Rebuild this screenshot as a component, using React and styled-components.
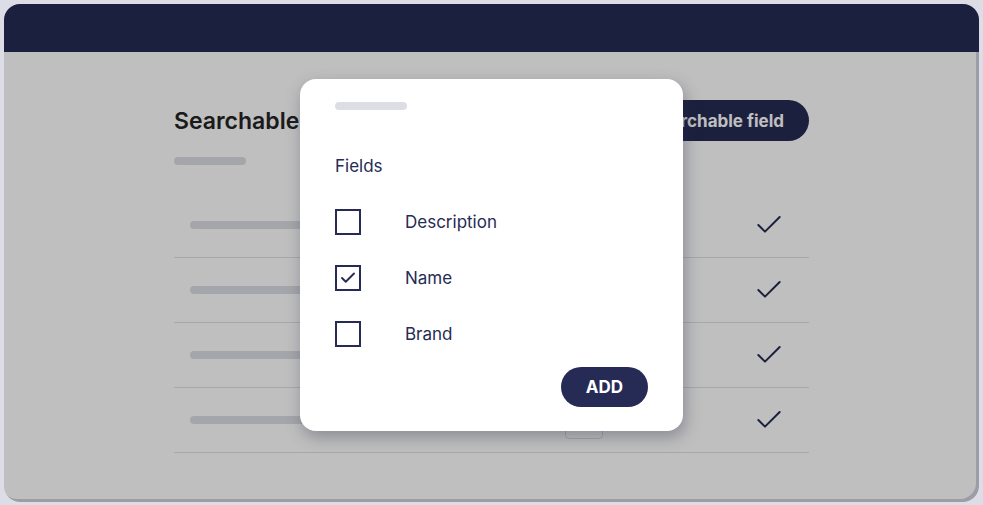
import React from 'react';
import styled, { createGlobalStyle } from 'styled-components';
import { Check } from 'lucide-react';

const GlobalStyle = createGlobalStyle`
  body {
    margin: 0;
    background: #dcdde6;
    font-family: Inter, "Noto Sans", "Liberation Sans", sans-serif;
  }
`;

const Page = styled.div`
  width: 983px;
  height: 505px;
  padding: 4px 4px 3px;
  box-sizing: border-box;
`;

const Window = styled.div`
  position: relative;
  height: 498px;
  background: #ffffff;
  border-radius: 16px;
  overflow: hidden;
  box-shadow: inset -3px -3px 0 #d2d3dc;
`;

const TopBar = styled.div`
  height: 48px;
  background: #262b55;
`;

const Main = styled.main`
  width: 635px;
  margin: 0 auto;
  padding-top: 48px;
`;

const TitleRow = styled.div`
  display: flex;
  align-items: center;
  justify-content: space-between;
  height: 41px;
`;

const Title = styled.h1`
  margin: 0;
  font-size: 23px;
  font-weight: 600;
  color: #242424;
`;

const PillButton = styled.button`
  height: ${(p) => p.$height || 41}px;
  padding: 0 ${(p) => p.$pad || 25}px;
  border: none;
  border-radius: 21px;
  background: #262b55;
  color: #ffffff;
  font-family: inherit;
  font-size: 17px;
  font-weight: 700;
`;

const Placeholder = styled.div`
  width: ${(p) => p.$w}px;
  height: 8px;
  border-radius: 4px;
  background: #dddee5;
`;

const SubBar = styled(Placeholder)`
  margin-top: 16px;
`;

const Table = styled.div`
  margin-top: 28px;
`;

const Row = styled.div`
  display: grid;
  grid-template-columns: 375px 38px 1fr;
  align-items: center;
  height: 64px;
  padding: 0 24px 0 16px;
  border-bottom: 1px solid #e0e0e0;
`;

const SmallBox = styled.div`
  width: 36px;
  height: 36px;
  border: 1px solid #dcdde4;
  border-radius: 4px;
`;

const RowCheck = styled(Check)`
  justify-self: end;
  color: #262b55;
`;

const Overlay = styled.div`
  position: absolute;
  inset: 0;
  padding-top: 4px;
  display: flex;
  align-items: center;
  justify-content: center;
  background: rgba(0, 0, 0, 0.25);
`;

const Modal = styled.div`
  width: 383px;
  height: 352px;
  box-sizing: border-box;
  padding: 23px 35px 24px;
  background: #ffffff;
  border-radius: 16px;
  box-shadow: 2px 6px 16px rgba(40, 42, 70, 0.35);
  display: flex;
  flex-direction: column;
`;

const Label = styled.div`
  margin-top: 44px;
  font-size: 17px;
  line-height: 24px;
  color: #262b55;
`;

const Options = styled.div`
  margin-top: 16px;
`;

const Option = styled.label`
  display: flex;
  align-items: center;
  gap: 44px;
  height: 56px;
  font-size: 17px;
  color: #262b55;
`;

const Box = styled.span`
  width: 26px;
  height: 26px;
  box-sizing: border-box;
  border: 2px solid #262b55;
  display: flex;
  align-items: center;
  justify-content: center;
  color: #262b55;
`;

const Footer = styled.div`
  margin-top: 5px;
  display: flex;
  justify-content: flex-end;
`;

const fields = [
  { name: 'Description', checked: false },
  { name: 'Name', checked: true },
  { name: 'Brand', checked: false },
];

export default function App() {
  return (
    <Page>
      <GlobalStyle />
      <Window>
        <TopBar />
        <Main>
          <TitleRow>
            <Title>Searchable fields</Title>
            <PillButton>Add searchable field</PillButton>
          </TitleRow>
          <SubBar $w={72} />
          <Table>
            {[0, 1, 2, 3].map((i) => (
              <Row key={i}>
                <Placeholder $w={220} />
                <SmallBox />
                <RowCheck size={32} strokeWidth={1.5} />
              </Row>
            ))}
          </Table>
        </Main>
        <Overlay>
          <Modal>
            <Placeholder $w={72} />
            <Label>Fields</Label>
            <Options>
              {fields.map((f) => (
                <Option key={f.name}>
                  <Box>{f.checked && <Check size={18} strokeWidth={2.5} />}</Box>
                  {f.name}
                </Option>
              ))}
            </Options>
            <Footer>
              <PillButton $height={40} $pad={25}>ADD</PillButton>
            </Footer>
          </Modal>
        </Overlay>
      </Window>
    </Page>
  );
}
